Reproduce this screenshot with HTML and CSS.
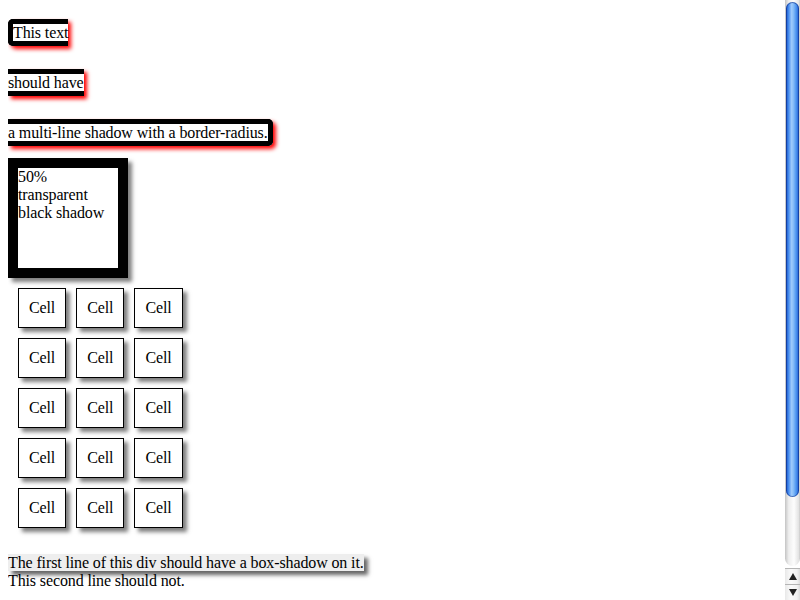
FILE: index.html
```html
<!DOCTYPE html>
<html>
<head>
<meta charset="utf-8">
<link rel="stylesheet" href="styles.css">
</head>
<body>
<div class="multi"><span class="frag first">This text</span><br><span class="frag mid">should have</span><br><span class="frag last">a multi-line shadow with a border-radius.</span></div>
<div class="half">50% transparent black shadow</div>
<table class="cells">
  <tr><td>Cell</td><td>Cell</td><td>Cell</td></tr>
  <tr><td>Cell</td><td>Cell</td><td>Cell</td></tr>
  <tr><td>Cell</td><td>Cell</td><td>Cell</td></tr>
  <tr><td>Cell</td><td>Cell</td><td>Cell</td></tr>
  <tr><td>Cell</td><td>Cell</td><td>Cell</td></tr>
</table>
<div class="firstline"><span class="fl">The first line of this div should have a box-shadow on it.</span><br>This second line should not.</div>
<div class="filler"></div>
<div class="scrollbar">
  <div class="track"><div class="thumb"></div></div>
  <div class="btn"><span class="arrow-up"></span></div>
  <div class="btn"><span class="arrow-down"></span></div>
</div>
</body>
</html>
```
FILE: styles.css
```css
html { overflow: hidden; }
body {
  margin: 8px;
  font-family: "Liberation Serif", "Times New Roman", serif;
  font-size: 16px;
  letter-spacing: -0.12px;
  color: #000;
  background: #fff;
}
.multi { line-height: 50px; width: 300px; white-space: nowrap; }
.frag {
  border-top: 5px solid #000;
  border-bottom: 5px solid #000;
  box-shadow: 3px 3px 4px red;
  background: #fff;
}
.first { border-left: 5px solid #000; border-radius: 5px 0 0 5px; }
.last { border-right: 5px solid #000; border-radius: 0 5px 5px 0; }
.half {
  width: 100px;
  height: 100px;
  border: 10px solid #000;
  box-shadow: 4px 4px 4px rgba(0,0,0,0.5);
}
.cells { border-spacing: 10px; }
.cells td {
  border: 1px solid #000;
  padding: 10px;
  line-height: 18px;
  box-shadow: 4px 4px 4px rgba(0,0,0,0.5);
}
.firstline { margin-top: 16px; line-height: 18px; }
.fl { background: #eee; box-shadow: 4px 4px 4px rgba(0,0,0,0.6); }
.filler { height: 80px; }
.scrollbar {
  position: fixed;
  top: 0;
  right: 0;
  bottom: 0;
  width: 15px;
  display: flex;
  flex-direction: column;
  background: #fff;
}
.track {
  flex: 1;
  margin-bottom: 2px;
  border-radius: 0 0 8px 8px;
  background: linear-gradient(to right, #c4c4c4, #eeeeee 25%, #fdfdfd 60%, #e4e4e4 90%, #cacaca);
  padding: 2px 1px 0;
  display: flex;
  flex-direction: column;
}
.thumb {
  height: 495px;
  border-radius: 7px;
  background: linear-gradient(to right, #1a4fc0, #3f86ec 18%, #9cc9fb 42%, #8bc0f9 55%, #4d95f0 78%, #1d58cc);
  box-shadow: inset 0 0 0 1px rgba(10,40,130,0.55);
}
.btn {
  height: 16px;
  border-top: 1px solid #b5b5b5;
  background: linear-gradient(to right, #e8e8e8, #fbfbfb 40%, #f2f2f2 80%, #dcdcdc);
  display: flex;
  align-items: center;
  justify-content: center;
  box-sizing: border-box;
}
.arrow-up {
  width: 0; height: 0;
  border-left: 4px solid transparent;
  border-right: 4px solid transparent;
  border-bottom: 7px solid #222;
}
.arrow-down {
  width: 0; height: 0;
  border-left: 4px solid transparent;
  border-right: 4px solid transparent;
  border-top: 7px solid #222;
}
```
